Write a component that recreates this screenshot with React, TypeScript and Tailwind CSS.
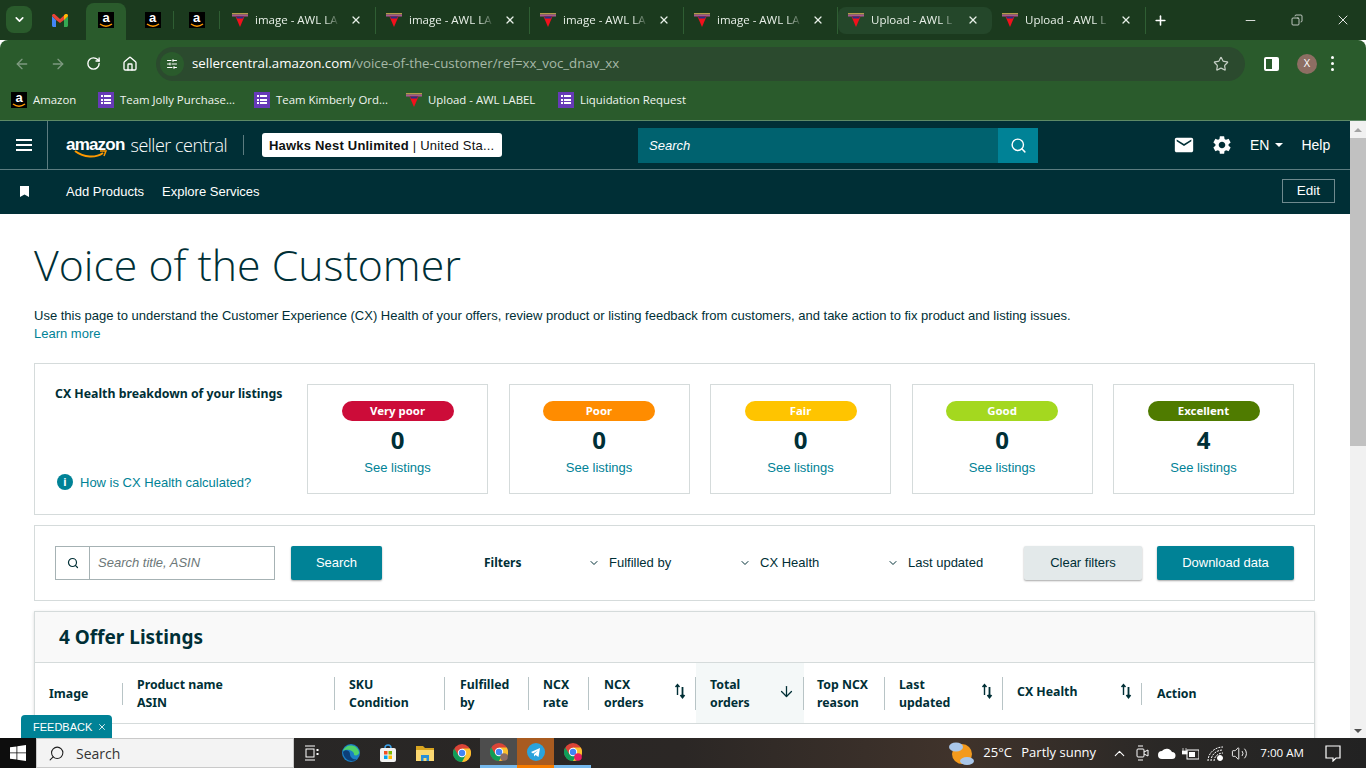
import {
  ArrowDown,
  ArrowLeft,
  ArrowRight,
  ChevronDown,
  ChevronUp,
  Copy,
  Home,
  Minus,
  Plus,
  RotateCw,
  Search,
  SlidersHorizontal,
  Star,
  Volume2,
  X,
} from "lucide-react";
import { MdEmail, MdSettings } from "react-icons/md";

const sans = "font-['Liberation_Sans',Arial,sans-serif]";
const ui = "font-['Open_Sans','Noto_Sans',sans-serif]";
const ember = "font-['Noto_Sans','Open_Sans',sans-serif]";

const AmazonIcon = ({ size = "w-4 h-4" }: { size?: string }) => (
  <span className={`${size} relative flex shrink-0 justify-center bg-black`}>
    <span className={`${sans} text-[13px] leading-[12px] font-bold text-white`}>a</span>
    <svg className="absolute bottom-0 left-0 h-[5px] w-full" viewBox="0 0 16 5" fill="none">
      <path d="M2 1c4 3 8 3 12 0" stroke="#f90" strokeWidth="1.5" />
    </svg>
  </span>
);

const GmailIcon = () => (
  <svg width="16" height="13" viewBox="0 0 16 13">
    <path d="M0 2v9.5C0 12.3.7 13 1.500 13H4V6z" fill="#4285f4" />
    <path d="M12 6v7h2.500c.8 0 1.500-.7 1.500-1.500V2z" fill="#34a853" />
    <path d="M0 2c0-2 2-2.500 3-1.500L8 5l5-4.500c1-1 3-.5 3 1.500l-4 4-4 3-4-3z" fill="#ea4335" />
    <path d="M12 6V1l1-.5c1-1 3-.5 3 1.500z" fill="#fbbc04" />
  </svg>
);

const AwlIcon = () => (
  <svg width="16" height="14" viewBox="0 0 16 14" className="shrink-0">
    <rect x="0" y="0" width="16" height="1.500" fill="#b59a4a" />
    <rect x="0" y="1.500" width="16" height="2" fill="#a8588f" />
    <path d="M3.500 3.500h9L8 14z" fill="#f2101c" />
    <path d="M4 3.500h8l-1 2H5z" fill="#2b2f86" />
  </svg>
);

const FormIcon = () => (
  <span className="flex h-4 w-4 shrink-0 flex-col justify-center gap-[1.5px] bg-[#673ab7] px-[3px]">
    {[0, 1, 2].map((row) => (
      <span key={row} className="flex gap-[1px]">
        <span className="h-[2px] w-[2px] bg-white" />
        <span className="h-[2px] w-[7px] bg-white" />
      </span>
    ))}
  </span>
);

const PageTab = ({ title, highlight }: { title: string; highlight?: boolean }) => (
  <div className="flex h-[34px] w-[154px] shrink-0 items-center py-[3px]">
    <div
      className={`flex h-[27px] w-full items-center rounded-lg pl-[10px] pr-[13px] ${
        highlight ? "bg-[#24472a]" : "border-r border-[#2f5e33] rounded-none"
      }`}
    >
      <AwlIcon />
      <span className={`${ui} ml-[7px] w-[85px] overflow-hidden text-[11.5px] whitespace-nowrap text-[#e8f0e8] [mask-image:linear-gradient(90deg,#000_82%,transparent)]`}>
        {title}
      </span>
      <X size={12} strokeWidth={2.5} className="ml-auto text-[#e8f0e8]" />
    </div>
  </div>
);

const PageIconTab = ({ divider }: { divider?: boolean }) => (
  <div className={`flex h-[18px] w-[46px] shrink-0 items-center justify-center ${divider ? "border-r border-[#2f5e33]" : ""}`}>
    <AmazonIcon />
  </div>
);

const Bookmark = ({ icon, label, width }: { icon: React.ReactNode; label: string; width: string }) => (
  <div className={`flex items-center gap-[6px] ${width}`}>
    {icon}
    <span className={`${ui} text-[11.4px] whitespace-nowrap text-[#f0f5f0]`}>{label}</span>
  </div>
);

const healthCards = [
  { label: "Very poor", count: "0", color: "bg-[#cc0c39] text-white" },
  { label: "Poor", count: "0", color: "bg-[#ff8c00] text-white" },
  { label: "Fair", count: "0", color: "bg-[#ffc400] text-white" },
  { label: "Good", count: "0", color: "bg-[#a4d81f] text-white" },
  { label: "Excellent", count: "4", color: "bg-[#4f7b00] text-white" },
];

const SortIcon = () => (
  <svg width="12" height="16" viewBox="0 0 12 16" fill="none" stroke="#002f36" strokeWidth="1.4" className="shrink-0">
    <path d="M3.500 12V2M1.500 4l2-2.500 2 2.500" />
    <path d="M8.500 4v10.500M6.500 12l2 2.500 2-2.500" strokeWidth="1.8" />
  </svg>
);

type Col = { lines: string[]; width: string; pad: string; sep: string; sort?: boolean; lift?: boolean };

const columns: Col[] = [
  { lines: ["Image"], width: "w-[88px]", pad: "pl-[14px]", sep: "short" },
  { lines: ["Product name", "ASIN"], width: "w-[212px]", pad: "pl-[14px]", sep: "tall" },
  { lines: ["SKU", "Condition"], width: "w-[110px]", pad: "pl-[14px]", sep: "tall" },
  { lines: ["Fulfilled", "by"], width: "w-[84px]", pad: "pl-[15px]", sep: "tall" },
  { lines: ["NCX", "rate"], width: "w-[60px]", pad: "pl-[14px]", sep: "tall" },
  { lines: ["NCX", "orders"], width: "w-[107px]", pad: "pl-[15px]", sep: "tall", sort: true },
];

const columnsRight: Col[] = [
  { lines: ["Top NCX", "reason"], width: "w-[81px]", pad: "pl-[13px]", sep: "tall" },
  { lines: ["Last", "updated"], width: "w-[118px]", pad: "pl-[14px]", sep: "tall", sort: true },
  { lines: ["CX Health"], width: "w-[139px]", pad: "pl-[14px]", sep: "short", sort: true, lift: true },
];

const HeaderCell = ({ col }: { col: Col }) => (
  <div className={`relative flex h-full shrink-0 items-center ${col.width} ${col.pad}`}>
    <div className={`${ember} text-[12.3px] leading-[18px] font-bold text-[#002f36] ${col.lift ? "mb-[3px]" : "mt-[2px]"}`}>
      {col.lines.map((line) => (
        <div key={line}>{line}</div>
      ))}
    </div>
    {col.sort && (
      <span className="absolute right-[10px] top-[20px]">
        <SortIcon />
      </span>
    )}
    <span
      className={`absolute right-0 w-px bg-[#b8c4c6] ${col.sep === "tall" ? "top-[14px] h-[33px]" : "top-[20px] h-[22px]"}`}
    />
  </div>
);

const FilterSelect = ({ label, width }: { label: string; width: string }) => (
  <div className={`flex items-center ${width}`}>
    <ChevronDown size={12} strokeWidth={2} className="mr-[9px] -ml-[1px] text-[#002f36]" />
    <span className={`${sans} text-[13px] text-[#002f36]`}>{label}</span>
  </div>
);

const ChromeLogo = ({ badge }: { badge?: string }) => (
  <svg width="18" height="18" viewBox="0 0 18 18">
    <circle cx="9" cy="9" r="9" fill="#db4437" />
    <path d="M9 18a9 9 0 0 0 7.800-13.500H9z" fill="#fbc02d" />
    <path d="M9 18l3.500-6.500H5.500L1.200 4.500A9 9 0 0 0 9 18z" fill="#0f9d58" />
    <circle cx="9" cy="9" r="4.200" fill="#fff" />
    <circle cx="9" cy="9" r="3.200" fill="#4285f4" />
    {badge && <circle cx="14" cy="14" r="3.800" fill={badge} />}
  </svg>
);

const TaskSlot = ({ children, className = "" }: { children: React.ReactNode; className?: string }) => (
  <div className={`flex h-full w-[37px] shrink-0 items-center justify-center ${className}`}>{children}</div>
);

export default function App() {
  return (
    <div className="flex h-[768px] w-[1366px] flex-col overflow-hidden bg-white">
      {/* browser tabs */}
      <div className="flex h-[40px] shrink-0 items-start bg-[#1b3a1e] pt-[3px]">
        <div className="ml-[6px] mt-[3px] flex h-[27px] w-[26px] items-center justify-center rounded-lg bg-[#2a5b2c]">
          <ChevronDown size={13} strokeWidth={3} className="text-white" />
        </div>
        <div className="ml-[20px] mt-[11px] flex w-[34px] justify-start">
          <GmailIcon />
        </div>
        <div className="flex h-[37px] w-[40px] items-start justify-center rounded-t-lg bg-[#2a5b2c] pt-[9px]">
          <AmazonIcon />
        </div>
        <div className="ml-[6px] mt-[8px] flex">
          <div className="flex h-[18px] w-[42px] items-center justify-center border-r border-[#2f5e33]">
            <AmazonIcon />
          </div>
          <PageIconTab divider />
        </div>
        <div className="ml-[2px] flex">
          <PageTab title="image - AWL LA" />
          <PageTab title="image - AWL LA" />
          <PageTab title="image - AWL LA" />
          <PageTab title="image - AWL LA" />
          <PageTab title="Upload - AWL L" highlight />
          <PageTab title="Upload - AWL L" />
        </div>
        <div className="ml-[7px] mt-[10px]">
          <Plus size={15} strokeWidth={2.5} className="text-white" />
        </div>
        <div className="ml-auto mt-[9px] flex items-center text-[#f2f2f2]">
          <Minus size={15} strokeWidth={1.4} className="mr-[33px]" />
          <Copy size={12} strokeWidth={1.5} className="mr-[32px] -scale-x-100" />
          <X size={16} strokeWidth={1.4} className="mr-[15px]" />
        </div>
      </div>

      {/* address bar */}
      <div className="flex h-[45px] shrink-0 items-center rounded-t-lg bg-[#2a5b2c] pl-[14px] pr-[14px] pt-[2px]">
        <ArrowLeft size={16} className="text-[#7e9a80]" />
        <ArrowRight size={16} className="ml-[20px] text-[#7e9a80]" />
        <RotateCw size={15} strokeWidth={2.2} className="ml-[20px] text-white" />
        <Home size={16} strokeWidth={2} className="ml-[21px] text-white" />
        <div className="ml-[18px] flex h-[34px] w-[1089px] items-center rounded-full bg-[#2b4a2e] pl-[4px] pr-[16px]">
          <span className="flex h-[24px] w-[24px] items-center justify-center rounded-full bg-[#2a5b2c]">
            <SlidersHorizontal size={12} className="text-white" />
          </span>
          <span className={`${ui} ml-[8px] text-[13.3px] text-white`}>
            sellercentral.amazon.com<span className="text-[#a6b8a7]">/voice-of-the-customer/ref=xx_voc_dnav_xx</span>
          </span>
          <Star size={16} strokeWidth={1.8} className="ml-auto text-[#c4cec4]" />
        </div>
        <div className="ml-[19px] flex h-[14px] w-[15px] justify-end rounded-[2px] border-2 border-white">
          <span className="w-[5px] bg-white" />
        </div>
        <span className={`${ui} ml-[18px] flex h-[20px] w-[20px] items-center justify-center rounded-full bg-[#8d6e63] text-[11px] text-white`}>
          X
        </span>
        <div className="ml-[14px] flex flex-col gap-[3px]">
          <span className="h-[3px] w-[3px] rounded-full bg-white" />
          <span className="h-[3px] w-[3px] rounded-full bg-white" />
          <span className="h-[3px] w-[3px] rounded-full bg-white" />
        </div>
      </div>

      {/* bookmarks */}
      <div className="flex h-[35px] shrink-0 items-center bg-[#2a5b2c] pb-[5px] pl-[11px]">
        <Bookmark icon={<AmazonIcon />} label="Amazon" width="w-[87px]" />
        <Bookmark icon={<FormIcon />} label="Team Jolly Purchase..." width="w-[156px]" />
        <Bookmark icon={<FormIcon />} label="Team Kimberly Ord..." width="w-[152px]" />
        <Bookmark icon={<AwlIcon />} label="Upload - AWL LABEL" width="w-[152px]" />
        <Bookmark icon={<FormIcon />} label="Liquidation Request" width="w-[160px]" />
      </div>

      {/* page */}
      <div className="relative flex min-h-0 flex-1 border-t border-[#5d8a66]">
        <div className="min-w-0 flex-1 overflow-hidden">
          {/* seller central nav */}
          <div className="flex h-[48px] items-center bg-[#002f36]">
            <div className="flex h-full w-[48px] items-center justify-center border-r border-[#5c7c80]">
              <div className="flex flex-col gap-[3px]">
                <span className="h-[2px] w-[16px] bg-white" />
                <span className="h-[2px] w-[16px] bg-white" />
                <span className="h-[2px] w-[16px] bg-white" />
              </div>
            </div>
            <div className="relative ml-[18px] flex h-[30px] w-[160px] items-center">
              <span className={`${sans} text-[17px] tracking-[-0.8px] font-bold text-white`}>amazon</span>
              <span className={`${ui} ml-[6px] text-[18px] font-light tracking-[-0.5px] whitespace-nowrap text-white`}>
                seller central
              </span>
              <svg className="absolute left-[8px] top-[20px]" width="34" height="10" viewBox="0 0 34 10" fill="none">
                <path d="M1 1c9 7 21 7 28 2" stroke="#f90" strokeWidth="2" />
                <path d="M26 1h6l-2 5" stroke="#f90" strokeWidth="1.500" />
              </svg>
            </div>
            <div className="ml-[17px] h-[20px] w-px bg-[#5c7c80]" />
            <div className={`${sans} ml-[18px] flex h-[24px] w-[240px] items-center rounded-[3px] bg-white pl-[7px] pt-[1px] text-[13px] tracking-[0.2px] whitespace-nowrap text-[#0f1111]`}>
              <span className="font-bold">Hawks Nest Unlimited</span>
              <span className="ml-[4px]">| United Sta...</span>
            </div>
            <div className="ml-[136px] flex h-[35px] w-[400px]">
              <div className={`${sans} flex flex-1 items-center bg-[#00626f] pl-[11px] pt-[1px] text-[13px] text-white italic`}>Search</div>
              <div className="flex w-[40px] items-center justify-center bg-[#008296]">
                <Search size={17} strokeWidth={2} className="text-white" />
              </div>
            </div>
            <MdEmail size={22} className="ml-[135px] text-white" />
            <MdSettings size={22} className="ml-[16px] text-white" />
            <span className={`${sans} ml-[17px] text-[14px] text-white`}>EN</span>
            <span className="ml-[6px] h-0 w-0 border-x-[4px] border-t-[4px] border-x-transparent border-t-white" />
            <span className={`${sans} ml-[18px] text-[14px] text-white`}>Help</span>
          </div>
          <div className="flex h-[45px] items-center border-t border-[#5c7c80] bg-[#002f36] pb-[2px] pl-[20px]">
            <svg width="9" height="11" viewBox="0 0 9 11" fill="white">
              <path d="M0 0h9v11L4.500 8.500 0 11z" />
            </svg>
            <span className={`${sans} ml-[37px] mt-[2px] text-[13px] text-white`}>Add Products</span>
            <span className={`${sans} ml-[18px] mt-[2px] text-[13px] text-white`}>Explore Services</span>
            <span className={`${sans} ml-auto mr-[15px] flex h-[24px] w-[53px] items-center justify-center border border-[#6f8a8e] text-[13.5px] text-white`}>
              Edit
            </span>
          </div>

          {/* content */}
          <div className="pl-[34px] pr-[35px]">
            <h1 className={`${ui} mt-[19px] text-[42.8px] leading-[63px] font-light text-[#002f36]`}>Voice of the Customer</h1>
            <p className={`${sans} mt-[11px] text-[13px] leading-[18px] text-[#002f36]`}>
              Use this page to understand the Customer Experience (CX) Health of your offers, review product or listing feedback from customers, and take action to fix product and listing issues.
            </p>
            <a className={`${sans} block text-[13px] leading-[18px] text-[#008296]`}>Learn more</a>

            <div className="mt-[20px] flex h-[152px] border border-[#d5dbdb] py-[20px] pl-[20px] pr-[20px]">
              <div className="flex w-[252px] shrink-0 flex-col justify-between pb-[2px] pt-[1px]">
                <div className={`${ember} text-[12.3px] leading-[18px] font-bold text-[#002f36]`}>
                  CX Health breakdown of your listings
                </div>
                <div className="ml-[2px] flex items-center">
                  <span className={`${ember} flex h-[16px] w-[16px] items-center justify-center rounded-full bg-[#008296] text-[11px] font-bold text-white`}>i</span>
                  <span className={`${sans} ml-[7px] text-[13px] text-[#008296]`}>How is CX Health calculated?</span>
                </div>
              </div>
              <div className="flex flex-1 justify-between">
                {healthCards.map((card) => (
                  <div key={card.label} className="flex h-[110px] w-[181px] flex-col items-center border border-[#d5dbdb] pt-[16px]">
                    <div className={`${ember} flex h-[20px] w-[112px] items-center justify-center rounded-full text-[11.4px] font-bold ${card.color}`}>
                      {card.label}
                    </div>
                    <div className={`${ember} mt-[3px] text-[24px] leading-[32px] font-bold text-[#002f36]`}>{card.count}</div>
                    <div className={`${sans} mt-[2px] text-[13px] leading-[20px] text-[#008296]`}>See listings</div>
                  </div>
                ))}
              </div>
            </div>

            <div className="mt-[10px] flex h-[76px] items-center border border-[#d5dbdb] pl-[20px] pr-[20px]">
              <div className="flex h-[34px] w-[220px] border border-[#a6b2b4]">
                <div className="flex w-[34px] items-center justify-center border-r border-[#a6b2b4]">
                  <Search size={12} strokeWidth={2.4} className="text-[#002f36]" />
                </div>
                <span className={`${sans} flex items-center pl-[8px] text-[13px] text-[#6c7778] italic`}>Search title, ASIN</span>
              </div>
              <button className={`${sans} ml-[16px] h-[34px] w-[91px] rounded-[2px] bg-[#008296] text-[13px] text-white shadow-[0_1px_2px_rgba(0,0,0,0.35)]`}>
                Search
              </button>
              <span className={`${ember} ml-[102px] w-[105px] text-[12px] font-bold text-[#002f36]`}>Filters</span>
              <FilterSelect label="Fulfilled by" width="w-[151px]" />
              <FilterSelect label="CX Health" width="w-[148px]" />
              <FilterSelect label="Last updated" width="w-[136px]" />
              <button className={`${sans} h-[34px] w-[118px] rounded-[2px] bg-[#e3e9ea] text-[13px] text-[#002f36] shadow-[0_1px_2px_rgba(0,0,0,0.35)]`}>
                Clear filters
              </button>
              <button className={`${sans} ml-[15px] h-[34px] w-[137px] rounded-[2px] bg-[#008296] text-[13px] text-white shadow-[0_1px_2px_rgba(0,0,0,0.35)]`}>
                Download data
              </button>
            </div>

            <div className="mt-[10px] h-[200px] border border-[#d5dbdb] shadow-[0_1px_3px_rgba(0,0,0,0.15)]">
              <div className={`${ember} flex h-[51px] items-center border-b border-[#d5dbdb] bg-[#f9f9f9] pl-[24px] text-[19px] font-bold text-[#002f36]`}>
                4 Offer Listings
              </div>
              <div className="flex h-[61px] items-stretch border-b border-[#d5dbdb]">
                {columns.map((col) => (
                  <HeaderCell key={col.lines[0] + col.lines[1]} col={col} />
                ))}
                <div className="relative flex w-[108px] shrink-0 items-center bg-[#f4f8f8] pl-[14px]">
                  <div className={`${ember} mt-[2px] text-[12.3px] leading-[18px] font-bold text-[#002f36]`}>
                    <div>Total</div>
                    <div>orders</div>
                  </div>
                  <ArrowDown size={17} strokeWidth={1.8} className="absolute right-[9px] top-[20px] text-[#002f36]" />
                  <span className="absolute right-0 top-[14px] h-[33px] w-px bg-[#b8c4c6]" />
                </div>
                {columnsRight.map((col) => (
                  <HeaderCell key={col.lines[0]} col={col} />
                ))}
                <div className={`${ember} flex items-center pl-[15px] pt-[2px] text-[12.3px] font-bold text-[#002f36]`}>Action</div>
              </div>
            </div>
          </div>
        </div>

        {/* page scrollbar */}
        <div className="flex w-[16px] shrink-0 flex-col items-center bg-[#f1f1f1]">
          <div className="flex h-[17px] items-center">
            <span className="h-0 w-0 border-x-[4px] border-b-[4px] border-x-transparent border-b-[#a3a3a3]" />
          </div>
          <div className="h-[308px] w-full bg-[#c1c1c1]" />
          <div className="mb-[5px] mt-auto h-0 w-0 border-x-[4px] border-t-[4px] border-x-transparent border-t-[#505050]" />
        </div>

        <div className={`${sans} absolute bottom-0 left-[21px] flex h-[23px] w-[91px] items-center rounded-t-[4px] bg-[#008296] pl-[12px] pt-[1px] text-[11px] text-white`}>
          FEEDBACK
          <X size={10} strokeWidth={2} className="ml-[5px]" />
        </div>
      </div>

      {/* windows taskbar */}
      <div className="flex h-[30px] shrink-0 items-center bg-[linear-gradient(90deg,#262626_0%,#2b2725_50%,#40332b_70%,#2a2826_85%,#222_100%)]">
        <div className="flex h-full w-[36px] items-center justify-center bg-[#0d0d0d]">
          <svg width="16" height="16" viewBox="0 0 16 16" fill="white">
            <path d="M0 2.300 6.500 1.400v6.100H0zM7.300 1.300 16 0v7.500H7.300zM0 8.300h6.500v6.300L0 13.700zM7.300 8.300H16V16l-8.700-1.300z" />
          </svg>
        </div>
        <div className="flex h-full w-[258px] items-center border border-[#c9c9c9] bg-[#f3f3f3] pl-[11px]">
          <Search size={17} strokeWidth={1.5} className="-scale-x-100 text-[#1f1f1f]" />
          <span className={`${ui} ml-[11px] text-[14px] text-[#333]`}>Search</span>
        </div>
        <TaskSlot className="-ml-[1px]">
          <svg width="16" height="16" viewBox="0 0 16 16" fill="none" stroke="white" strokeWidth="1">
            <path d="M1 1h10M1 15h10" />
            <rect x="2" y="4" width="8" height="8" />
            <path d="M13.500 4v2M13.500 8v2" strokeWidth="2" />
          </svg>
        </TaskSlot>
        <TaskSlot className="ml-[2px]">
          <svg width="18" height="18" viewBox="0 0 18 18">
            <circle cx="9" cy="9" r="9" fill="#1b7fc4" />
            <path d="M1 7c2-7 14-8 16 1 .5 3-3 4-5 3 1-4-7-7-11-4z" fill="#4fd26b" />
            <path d="M1 8c2-3 7-2 7 2 0 4 4 6 7 5-4 4-13 2-14-7z" fill="#0c3f78" />
          </svg>
        </TaskSlot>
        <TaskSlot>
          <svg width="16" height="18" viewBox="0 0 16 18">
            <rect x="0" y="4" width="16" height="14" rx="2" fill="#f2f2f2" />
            <path d="M5 4c0-4 6-4 6 0" fill="none" stroke="#3aa0e8" strokeWidth="1.500" />
            <rect x="4" y="7" width="3.500" height="3.500" fill="#f25022" />
            <rect x="8.500" y="7" width="3.500" height="3.500" fill="#7fba00" />
            <rect x="4" y="11.500" width="3.500" height="3.500" fill="#00a4ef" />
            <rect x="8.500" y="11.500" width="3.500" height="3.500" fill="#ffb900" />
          </svg>
        </TaskSlot>
        <TaskSlot>
          <svg width="18" height="16" viewBox="0 0 18 16">
            <path d="M0 1h7l2 2h9v13H0z" fill="#d9a520" />
            <rect x="0" y="5" width="18" height="11" fill="#fbd872" />
            <path d="M5 16v-6h8v6h-2.500v-3h-3v3z" fill="#2a8fd8" />
          </svg>
        </TaskSlot>
        <TaskSlot>
          <ChromeLogo />
        </TaskSlot>
        <TaskSlot className="border-b-[3px] border-[#76b9ed] bg-[#4d4d4d]">
          <ChromeLogo badge="#8d6e63" />
        </TaskSlot>
        <TaskSlot className="border-b-[3px] border-[#f57c00] bg-[#a85b20]">
          <svg width="18" height="18" viewBox="0 0 18 18">
            <circle cx="9" cy="9" r="9" fill="#2aa3dc" />
            <path d="M4 9l9-4-1.500 9-3-2-1.500 1.500V11l4-3.500L6 10.500z" fill="white" />
          </svg>
        </TaskSlot>
        <TaskSlot className="border-b-[3px] border-[#76b9ed]">
          <ChromeLogo badge="#e91e63" />
        </TaskSlot>
        <div className="ml-auto flex h-full items-center">
          <svg width="28" height="28" viewBox="0 0 28 28" className="mr-[7px]">
            <circle cx="14" cy="15" r="10" fill="#f39a1d" />
            <ellipse cx="8" cy="8" rx="7" ry="4.500" fill="#a9c7ea" />
            <ellipse cx="19" cy="22" rx="7" ry="4" fill="#a9c7ea" />
          </svg>
          <span className={`${ui} w-[38px] text-[13px] text-white`}>25°C</span>
          <span className={`${ui} w-[90px] text-[13px] whitespace-nowrap text-white`}>Partly sunny</span>
          <ChevronUp size={17} strokeWidth={1.5} className="text-white" />
          <svg width="14" height="18" viewBox="0 0 14 18" fill="none" stroke="white" className="ml-[7px]">
            <rect x="2" y="5" width="7" height="8" rx="1" />
            <path d="M9 8l4-2v6l-4-2M3 2h5M3 16h5" />
          </svg>
          <svg width="18" height="12" viewBox="0 0 18 12" fill="white" className="ml-[9px]">
            <path d="M4 12a4 4 0 0 1 0-8 6 6 0 0 1 10 1 3.500 3.500 0 0 1 0 7z" />
          </svg>
          <svg width="17" height="13" viewBox="0 0 17 13" fill="white" className="ml-[6px]">
            <rect x="5" y="3" width="12" height="9" fill="none" stroke="white" />
            <rect x="7" y="5" width="6" height="5" />
            <path d="M1 1v3M4 1v3M0 4h5v3H0z" stroke="white" strokeWidth=".7" />
          </svg>
          <svg width="17" height="15" viewBox="0 0 17 15" fill="none" stroke="white" className="ml-[8px]">
            <path d="M1 15C1 7 8 1 16 1M4 15c0-6 5-11 12-11M7 15c0-4 4-8 9-8" strokeDasharray="2 1" />
            <circle cx="13" cy="12" r="2.500" fill="white" />
          </svg>
          <Volume2 size={17} strokeWidth={1.3} className="ml-[7px] text-white" />
          <span className={`${ui} ml-[12px] text-[11.6px] text-white`}>7:00 AM</span>
          <svg width="16" height="17" viewBox="0 0 16 17" fill="none" stroke="white" strokeWidth="1.2" className="ml-[21px] mr-[25px]">
            <path d="M1 1h14v12H11l-3 3v-3H1z" />
          </svg>
        </div>
      </div>
    </div>
  );
}
